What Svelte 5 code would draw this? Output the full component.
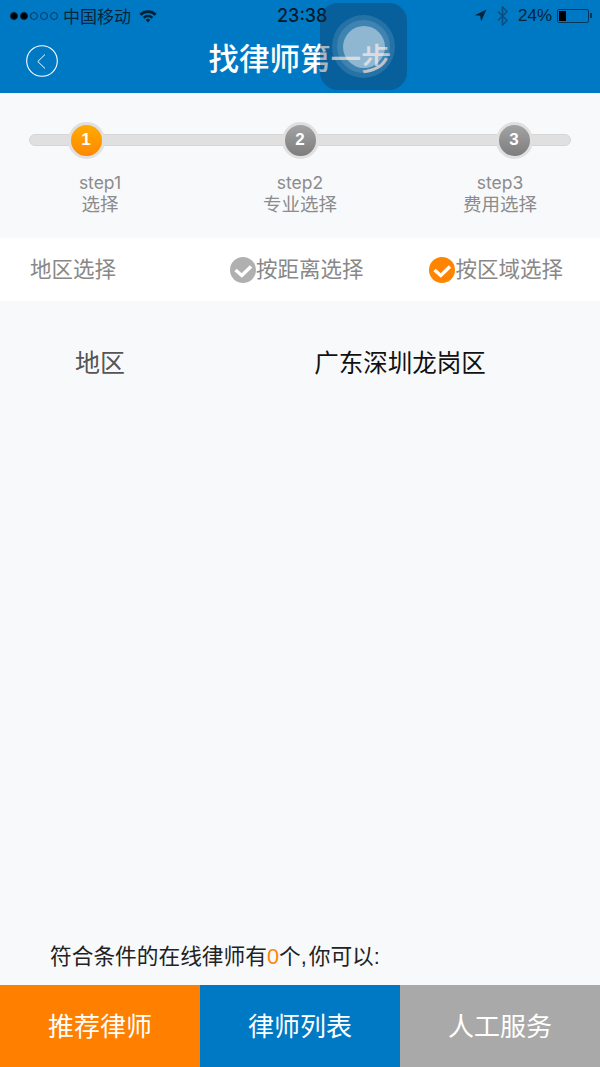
<script>
  const steps = [
    { n: 1, en: 'step1', zh: '选择', active: true },
    { n: 2, en: 'step2', zh: '专业选择' },
    { n: 3, en: 'step3', zh: '费用选择' }
  ];
  const tabs = [
    { label: '按距离选择', on: false },
    { label: '按区域选择', on: true }
  ];
</script>

<div class="page">
  <header class="head">
    <div class="status">
      <div class="st-left">
        <span class="dots"><i class="f"></i><i class="f"></i><i></i><i></i><i></i></span>
        <span class="carrier">中国移动</span>
        <svg class="wifi" width="18" height="14" viewBox="0 0 18 14">
          <path d="M.5 4.800a12.200 12.200 0 0 1 17 0l-1.800 1.900a9.600 9.600 0 0 0-13.400 0z" fill="#061f33"/>
          <path d="M3.800 8a7.400 7.400 0 0 1 10.400 0l-1.700 1.800a5 5 0 0 0-7 0z" fill="#061f33"/>
          <path d="M6.700 10.800a3.300 3.300 0 0 1 4.600 0L9 13.500z" fill="#061f33"/>
        </svg>
      </div>
      <span class="time">23:38</span>
      <div class="st-right">
        <svg width="13" height="13" viewBox="0 0 13 13"><path d="M12.500 .5 .8 6.200l5.400.6.9 5.500z" fill="#07243a"/></svg>
        <svg class="bt" width="13" height="20" viewBox="0 0 13 20"><path d="M2 5.500l9 9-4.500 4.500V1l4.500 4.500-9 9" fill="none" stroke="#0b4f80" stroke-width="1.600"/></svg>
        <span class="pct">24%</span>
        <span class="batt"><span class="lvl"></span></span><span class="nub"></span>
      </div>
    </div>
    <div class="nav">
      <button class="back" aria-label="返回">
        <svg width="32" height="32" viewBox="0 0 32 32">
          <circle cx="16" cy="16" r="15.300" fill="none" stroke="#fff" stroke-width="1.100"/>
          <path d="M19 9.500 11.800 16.500 19 23.500" fill="none" stroke="#fff" stroke-width="1"/>
        </svg>
      </button>
      <h1>找律师第一步</h1>
    </div>
  </header>

  <section class="steps">
    <div class="track">
      {#each steps as s}
        <span class="knob" class:active={s.active}><b>{s.n}</b></span>
      {/each}
    </div>
    <div class="labels">
      {#each steps as s}
        <div class="lab"><div class="en">{s.en}</div><div class="zh">{s.zh}</div></div>
      {/each}
    </div>
  </section>

  <section class="tabs">
    <span class="tabs-title">地区选择</span>
    <div class="opts">
      {#each tabs as t}
        <span class="opt">
          <svg width="26" height="26" viewBox="0 0 26 26">
            <circle cx="13" cy="13" r="13" fill={t.on ? '#ff8400' : '#b0b0b0'}/>
            <path d="M5.500 13 11.800 18.500 21 9.500" fill="none" stroke="#fff" stroke-width="3.400"/>
          </svg><span class="opt-text">{t.label}</span>
        </span>
      {/each}
    </div>
  </section>

  <section class="region">
    <span class="r-key">地区</span>
    <span class="r-val">广东深圳龙岗区</span>
  </section>

  <p class="hint">符合条件的在线律师有<em>0</em>个<span class="comma">,</span>你可以:</p>

  <footer class="btns">
    <button class="b1">推荐律师</button>
    <button class="b2">律师列表</button>
    <button class="b3">人工服务</button>
  </footer>

  <div class="assist"><span class="r1"><span class="r2"><span class="r3"></span></span></span></div>
</div>

<style>
  :global(body) { margin: 0; }
  .page {
    position: relative;
    width: 600px;
    height: 1067px;
    display: flex;
    flex-direction: column;
    background: #f8f9fb;
    font-family: "Noto Sans CJK SC", "Liberation Sans", sans-serif;
    overflow: hidden;
  }
  .head { height: 93px; background: #0079c5; flex: none; }
  .status {
    height: 30px;
    position: relative;
    display: flex;
    justify-content: space-between;
    align-items: center;
    padding: 1px 8px 0 10px;
    box-sizing: border-box;
    color: #07243a;
    font-size: 17px;
  }
  .st-left, .st-right { display: flex; align-items: center; }
  .dots { display: flex; gap: 2px; }
  .dots i { width: 8px; height: 8px; border: 1px solid #07243a; border-radius: 50%; box-sizing: border-box; opacity: .75; }
  .dots i.f { background: #000; opacity: 1; }
  .carrier { margin-left: 5px; width: 68px; line-height: 20px; }
  .wifi { margin-left: 8px; }
  .time {
    position: absolute;
    left: 277px;
    font: 500 18px/20px Inter, "Liberation Sans", sans-serif;
    color: #061a2a;
  }
  .st-right { font-family: "Liberation Sans", sans-serif; }
  .bt { margin-left: 9px; }
  .pct { margin-left: 9px; font-size: 17px; }
  .batt { margin-left: 5px; border: 1px solid #07365a; border-radius: 2px; padding: 1px; display: block; box-sizing: content-box; width: 28px; height: 10px; }
  .lvl { display: block; width: 7px; height: 100%; background: #000; }
  .nub { width: 2px; height: 5px; background: #07365a; margin-left: 1px; }
  .nav { height: 63px; position: relative; display: flex; align-items: center; justify-content: center; }
  .nav h1 { margin: 0 0 10px; color: #fff; font-size: 30.500px; line-height: 40px; font-weight: 500; }
  .back { position: absolute; left: 26px; top: 15px; padding: 0; border: 0; background: none; width: 32px; height: 32px; }
  .back svg { display: block; }

  .steps { height: 145px; flex: none; padding: 41px 29px 0; box-sizing: border-box; }
  .track {
    height: 12px;
    box-sizing: border-box;
    background: #e0e0e0;
    border: 1px solid #d6d6d6;
    border-radius: 6px;
    display: flex;
    justify-content: space-between;
    align-items: center;
    padding: 0 37.500px;
  }
  .knob {
    width: 37px;
    height: 37px;
    flex: none;
    box-sizing: border-box;
    border-radius: 50%;
    border: 3.500px solid #e0e0e0;
    background: linear-gradient(#a3a3a3, #7d7d7d);
    color: #fff;
    display: flex;
    align-items: center;
    justify-content: center;
    font: 700 17px "Liberation Sans", sans-serif;
  }
  .knob.active { background: linear-gradient(#ffab00, #ff8800); }
  .labels {
    display: grid;
    grid-template-columns: repeat(3, 200px);
    margin: 27px -29px 0;
  }
  .lab { text-align: center; color: #8c8c8c; }
  .en { font: 17.500px/20px Inter, "Liberation Sans", sans-serif; }
  .zh { font-size: 18.500px; line-height: 21px; }

  .tabs {
    height: 63px;
    flex: none;
    background: #fff;
    display: flex;
    align-items: center;
    justify-content: space-between;
    padding: 0 37px 0 30px;
    color: #888;
    font-size: 21.500px;
  }
  .tabs-title, .opt-text { padding-bottom: 4px; line-height: 30px; }
  .opts { display: flex; gap: 66px; }
  .opt { display: flex; align-items: center; }

  .region {
    flex: 1;
    display: grid;
    grid-template-columns: 200px 400px;
    justify-items: center;
    align-content: start;
    padding-top: 43px;
    line-height: 36px;
  }
  .r-key { color: #555; font-size: 25px; margin-top: -1px; }
  .r-val { color: #111; font-size: 24.500px; }

  .hint {
    margin: 0 0 12px;
    padding-left: 50px;
    color: #222;
    font-family: "Liberation Sans", "Noto Sans CJK SC", sans-serif;
    font-size: 21.700px;
    line-height: 32px;
  }
  .hint em { font-style: normal; color: #ff8400; }
  .comma { margin: 0 2px 0 0; }

  .btns { height: 82px; flex: none; display: grid; grid-template-columns: repeat(3, 200px); }
  .btns button { border: 0; padding: 0 0 4px; color: #fff; font: 400 26px "Noto Sans CJK SC", sans-serif; }
  .b1 { background: #ff8000; }
  .b2 { background: #0079c5; }
  .b3 { background: #a9a9a9; }

  .assist {
    position: absolute;
    left: 320px;
    top: 3px;
    width: 87px;
    height: 87px;
    border-radius: 18px;
    background: rgba(20, 50, 80, .36);
    display: flex;
    align-items: center;
    justify-content: center;
  }
  .r1, .r2, .r3 { display: flex; align-items: center; justify-content: center; border-radius: 50%; }
  .r1 { width: 63px; height: 63px; background: rgba(255,255,255,.12); }
  .r2 { width: 53px; height: 53px; background: rgba(255,255,255,.12); }
  .r3 { width: 42px; height: 42px; background: rgba(255,255,255,.42); }
</style>
